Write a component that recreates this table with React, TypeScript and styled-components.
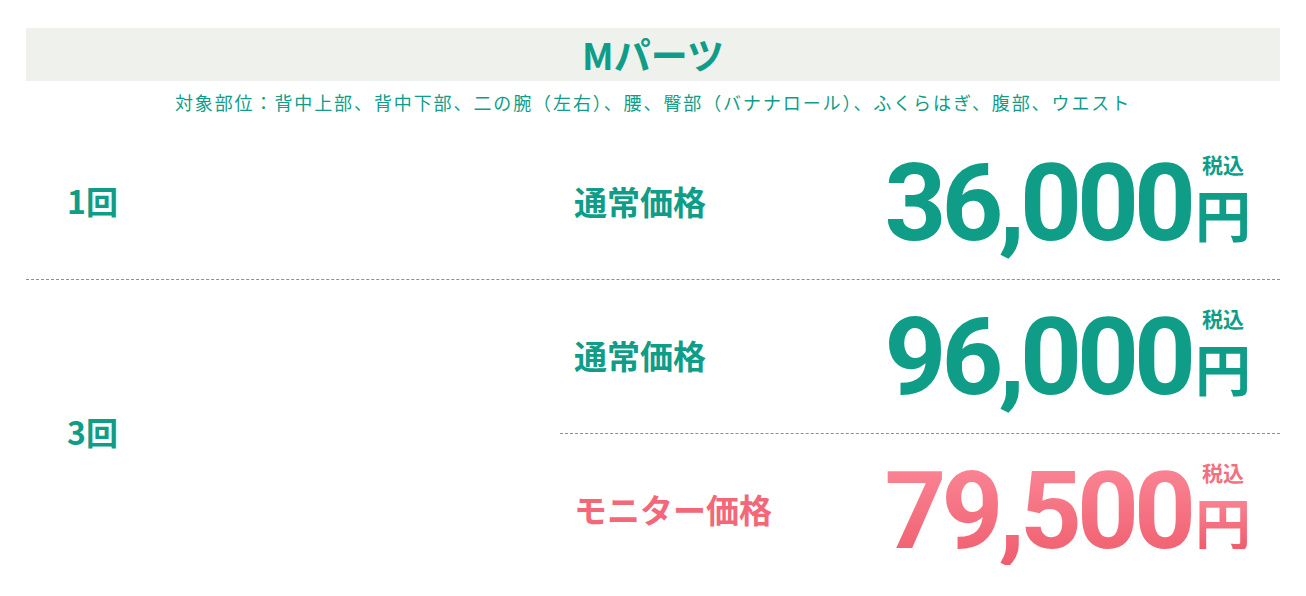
import React from "react";
import styled, { createGlobalStyle, css } from "styled-components";

const Global = createGlobalStyle`
  html, body { margin: 0; padding: 0; background: #fff; }
  body { font-family: "Noto Sans CJK JP", "Noto Sans", sans-serif; }
`;

const TEAL = "#0f9d88";

const Page = styled.div`
  padding: 28px 26px 0 26px;
`;

const TitleBar = styled.div`
  background: #eff1ec;
  height: 53px;
  display: flex;
  align-items: center;
  justify-content: center;
`;

const Title = styled.h2`
  margin: 0;
  font-size: 37px;
  font-weight: 700;
  color: ${TEAL};
  line-height: 1;
`;

const Note = styled.p`
  margin: 8px 0 0;
  text-align: center;
  font-size: 18px;
  letter-spacing: 1.9px;
  line-height: 26px;
  color: ${TEAL};
`;

const Table = styled.div`
  margin-top: 11px;
`;

const Row = styled.div<{ $last?: boolean }>`
  display: grid;
  grid-template-columns: 534px 1fr;
  border-bottom: ${(p) => (p.$last ? "none" : "1px dashed #8f8f8f")};
`;

const Count = styled.div`
  display: flex;
  align-items: center;
  padding: 0 0 6px 41px;
  font-size: 32px;
  font-weight: 700;
  color: ${TEAL};
`;

const Prices = styled.div`
  display: flex;
  flex-direction: column;
`;

const PriceRow = styled.div<{ $divided?: boolean }>`
  height: 153px;
  display: flex;
  align-items: center;
  justify-content: space-between;
  padding: 0 30px 0 14px;
  ${(p) =>
    p.$divided &&
    css`
      border-bottom: 1px dashed #8f8f8f;
    `}
`;

const Kind = styled.div<{ $monitor?: boolean }>`
  font-size: 33px;
  font-weight: 700;
  line-height: 1;
  margin-bottom: 3px;
  color: ${(p) => (p.$monitor ? "#f36878" : TEAL)};
`;

const Amount = styled.div`
  display: flex;
  align-items: flex-end;
`;

const gradient = css`
  background: linear-gradient(180deg, #fb8898 0%, #ef5d6d 100%);
  -webkit-background-clip: text;
  background-clip: text;
  color: transparent;
`;

const Digits = styled.span<{ $monitor?: boolean }>`
  font-family: Roboto, "Liberation Sans", sans-serif;
  font-weight: 700;
  font-size: 108px;
  letter-spacing: -5px;
  line-height: 1;
  color: ${TEAL};
  ${(p) => p.$monitor && gradient}
`;

const Unit = styled.div`
  display: flex;
  flex-direction: column;
  align-items: center;
  margin: 0 -1px 16px 4px;
`;

const Tax = styled.span<{ $monitor?: boolean }>`
  font-size: 21px;
  font-weight: 700;
  line-height: 1;
  margin-bottom: 10px;
  color: ${(p) => (p.$monitor ? "#f37080" : TEAL)};
`;

const Yen = styled.span<{ $monitor?: boolean }>`
  font-size: 56px;
  font-weight: 700;
  line-height: 1;
  color: ${TEAL};
  ${(p) => p.$monitor && gradient}
`;

type P = { kind: string; value: string; monitor?: boolean; divided?: boolean };

const Price = ({ kind, value, monitor, divided }: P) => (
  <PriceRow $divided={divided}>
    <Kind $monitor={monitor}>{kind}</Kind>
    <Amount>
      <Digits $monitor={monitor}>{value}</Digits>
      <Unit>
        <Tax $monitor={monitor}>税込</Tax>
        <Yen $monitor={monitor}>円</Yen>
      </Unit>
    </Amount>
  </PriceRow>
);

export default function App() {
  return (
    <>
      <Global />
      <Page>
        <TitleBar>
          <Title>Mパーツ</Title>
        </TitleBar>
        <Note>
          対象部位：背中上部、背中下部、二の腕（左右）、腰、臀部（バナナロール）、ふくらはぎ、腹部、ウエスト
        </Note>
        <Table>
          <Row>
            <Count>1回</Count>
            <Prices>
              <Price kind="通常価格" value="36,000" />
            </Prices>
          </Row>
          <Row $last>
            <Count>3回</Count>
            <Prices>
              <Price kind="通常価格" value="96,000" divided />
              <Price kind="モニター価格" value="79,500" monitor />
            </Prices>
          </Row>
        </Table>
      </Page>
    </>
  );
}
